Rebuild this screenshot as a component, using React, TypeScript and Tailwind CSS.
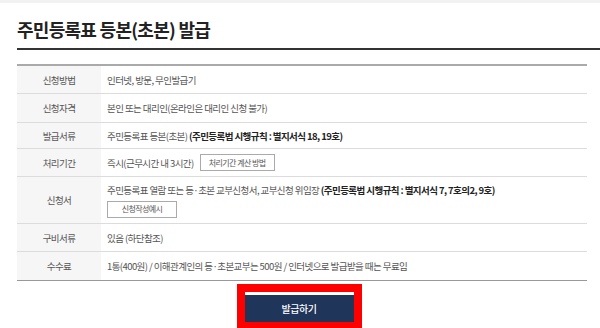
import React from 'react';

const font = "font-['Noto_Sans_CJK_KR','Noto_Sans',sans-serif]";

function Row({ label, h, children }: { label: string; h: string; children: React.ReactNode }) {
  return (
    <div className={`grid grid-cols-[84px_1fr] border-b border-[#dcdcdc] ${h}`}>
      <div className="bg-[#f6f6f6] flex items-center justify-center text-[#555]">{label}</div>
      <div className="flex flex-col justify-center pl-[6px] text-[#555]">{children}</div>
    </div>
  );
}

function SmallBtn({ children, w }: { children: React.ReactNode; w: string }) {
  return (
    <button className={`h-[17px] ${w} border border-[#aaa] bg-white text-[8px] text-[#555] flex items-center justify-center`}>
      {children}
    </button>
  );
}

export default function App() {
  return (
    <div className={`w-[600px] h-[328px] bg-white overflow-hidden ${font}`}>
      <div className="h-[3px] bg-[#f2f2f2]" />
      <div className="pl-[17px]">
        <h1 className="h-[47px] pt-[14px] border-b-2 border-[#333] text-[18px] font-bold text-[#222] tracking-[-0.04em] leading-[24px]">
          주민등록표 등본(초본) 발급
        </h1>
        <div className="mt-[14px] mr-[13px] border-t-2 border-[#aaa] text-[9.5px] tracking-[-0.06em] leading-[14px]">
          <Row label="신청방법" h="h-[28px]">인터넷, 방문, 무인발급기</Row>
          <Row label="신청자격" h="h-[29px]">본인 또는 대리인(온라인은 대리인 신청 불가)</Row>
          <Row label="발급서류" h="h-[26px]">
            <span>
              주민등록표 등본(초본) <b className="text-[#222]">(주민등록법 시행규칙 : 별지서식 18, 19호)</b>
            </span>
          </Row>
          <Row label="처리기간" h="h-[28px]">
            <div className="flex items-center gap-[6px]">
              <span>즉시(근무시간 내 3시간)</span>
              <SmallBtn w="w-[75px]">처리기간 계산 방법</SmallBtn>
            </div>
          </Row>
          <Row label="신청서" h="h-[47px]">
            <span>
              주민등록표 열람 또는 등·초본 교부신청서, 교부신청 위임장{' '}
              <b className="text-[#222]">(주민등록법 시행규칙 : 별지서식 7, 7호의2, 9호)</b>
            </span>
            <div className="mt-[4px]">
              <SmallBtn w="w-[70px]">신청작성예시</SmallBtn>
            </div>
          </Row>
          <Row label="구비서류" h="h-[28px]">있음 (하단참조)</Row>
          <div className="grid grid-cols-[84px_1fr] border-b border-[#999] h-[29px]">
            <div className="bg-[#f6f6f6] flex items-center justify-center text-[#555]">수수료</div>
            <div className="flex items-center pl-[6px] text-[#555]">
              1통(400원) / 이해관계인의 등·초본교부는 500원 / 인터넷으로 발급받을 때는 무료임
            </div>
          </div>
        </div>
      </div>
      <div className="flex justify-center mt-[3px] pr-[2px]">
        <div className="border-[8px] border-[#ff0000] bg-white">
          <button className="w-[109px] h-[30px] bg-[#1f355a] border-t-[3px] border-white text-white text-[10px] font-medium tracking-[-0.04em]">
            발급하기
          </button>
        </div>
      </div>
    </div>
  );
}
